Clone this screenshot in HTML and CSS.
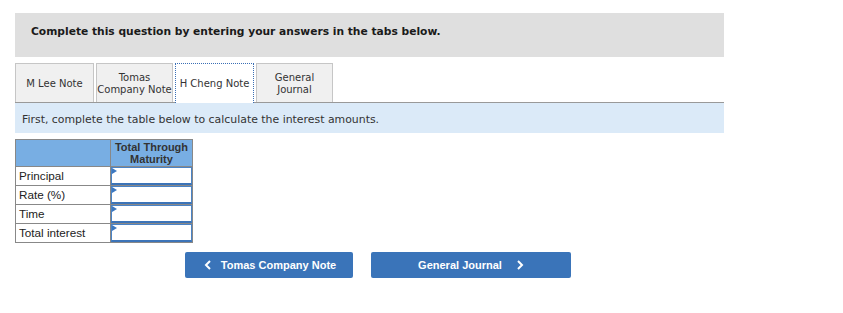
FILE: index.html
```html
<!DOCTYPE html>
<html>
<head>
<meta charset="utf-8">
<link rel="stylesheet" href="styles.css">
</head>
<body>
<div class="page">
  <div class="header">Complete this question by entering your answers in the tabs below.</div>
  <div class="tabs">
    <div class="tab">M Lee Note</div>
    <div class="tab">Tomas<br>Company Note</div>
    <div class="tab active">H Cheng Note</div>
    <div class="tab">General<br>Journal</div>
  </div>
  <div class="instruction">First, complete the table below to calculate the interest amounts.</div>
  <table class="calc">
    <tr class="head">
      <th class="blank"></th>
      <th class="colhead">Total Through<br>Maturity</th>
    </tr>
    <tr><td class="label">Principal</td><td class="inp"><div class="box"></div></td></tr>
    <tr><td class="label">Rate (%)</td><td class="inp"><div class="box"></div></td></tr>
    <tr><td class="label">Time</td><td class="inp"><div class="box"></div></td></tr>
    <tr><td class="label">Total interest</td><td class="inp"><div class="box"></div></td></tr>
  </table>
  <div class="nav">
    <button class="btn prev">
      <svg width="8" height="10" viewBox="0 0 8 10"><path d="M6 1 L2 5 L6 9" fill="none" stroke="#fff" stroke-width="2"/></svg>
      <span>Tomas Company Note</span>
    </button>
    <button class="btn next">
      <span>General Journal</span>
      <svg width="8" height="10" viewBox="0 0 8 10"><path d="M2 1 L6 5 L2 9" fill="none" stroke="#fff" stroke-width="2"/></svg>
    </button>
  </div>
</div>
</body>
</html>
```
FILE: styles.css
```css
html, body {
  margin: 0;
  padding: 0;
  background: #fff;
}
.page {
  padding: 13px 0 0 15px;
  width: 709px;
  font-family: "DejaVu Sans", Verdana, sans-serif;
  color: #333;
}
.header {
  box-sizing: border-box;
  height: 44px;
  background: #dfdfdf;
  padding: 12px 0 0 16px;
  font-weight: bold;
  font-size: 10.7px;
  line-height: 14px;
  color: #1a1a1a;
}
.tabs {
  margin-top: 6px;
  display: flex;
  gap: 2px;
  border-bottom: 1px solid #999;
  height: 39px;
}
.tab {
  box-sizing: border-box;
  height: 39px;
  width: 77px;
  background: #f0f0f0;
  border: 1px solid #c6c6c6;
  border-bottom: none;
  display: flex;
  align-items: center;
  justify-content: center;
  text-align: center;
  font-size: 10px;
  line-height: 12px;
  padding-top: 1px;
  color: #333;
}
.tab:first-child { width: 79px; }
.tab.active {
  width: 79px;
  height: 40px;
  background: #fff;
  border: 1px dotted #3a6fb5;
  border-bottom: none;
  position: relative;
  z-index: 1;
}
.instruction {
  box-sizing: border-box;
  height: 30px;
  background: #dbeaf8;
  display: flex;
  align-items: center;
  padding: 2px 0 0 7px;
  font-size: 10.9px;
  color: #333;
}
.calc {
  margin-top: 6px;
  border-collapse: collapse;
  font-family: "Liberation Sans", Arial, sans-serif;
  font-size: 11px;
}
.calc td, .calc th {
  border: 1px solid #888;
  padding: 0;
}
.calc .head th {
  background: #78aee3;
  height: 26px;
  font-weight: bold;
  color: #333;
  line-height: 12px;
  vertical-align: middle;
}
.calc .blank { width: 94px; }
.calc .colhead { width: 81px; }
.calc .label {
  height: 18px;
  line-height: 17px;
  padding-left: 3px;
  font-size: 11.7px;
  color: #222;
  text-align: left;
  vertical-align: top;
}
.calc .inp {
  padding: 0;
}
.box {
  position: relative;
  box-sizing: border-box;
  height: 18px;
  width: 81px;
  border: 1px solid #4a83c6;
  border-bottom: 2px solid #3c74b8;
  background: #fff;
}
.box::before {
  content: "";
  position: absolute;
  left: 0;
  top: 0;
  border-top: 3px solid transparent;
  border-bottom: 3px solid transparent;
  border-left: 5px solid #3c78c0;
}
.nav {
  margin-top: 9px;
  margin-left: 170px;
  display: flex;
  gap: 18px;
}
.btn {
  height: 26px;
  background: #3a74b9;
  color: #fff;
  border: none;
  border-radius: 2px;
  font-family: "Liberation Sans", Arial, sans-serif;
  font-weight: bold;
  font-size: 11px;
  display: flex;
  align-items: center;
  justify-content: center;
  gap: 10px;
  padding: 0;
}
.btn.prev { width: 168px; gap: 9px; padding-left: 2px; }
.btn.next { width: 200px; gap: 14px; }
```
